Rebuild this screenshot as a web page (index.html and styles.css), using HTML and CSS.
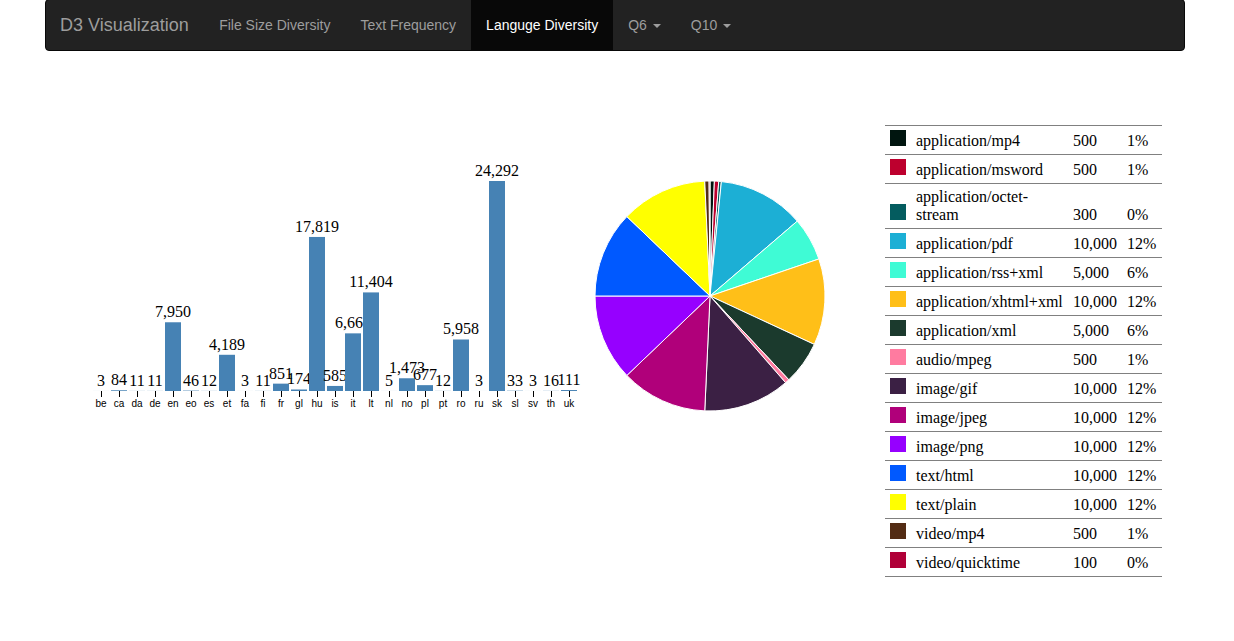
FILE: index.html
```html
<!DOCTYPE html>
<html lang="en">
<head>
<meta charset="utf-8">
<title>D3 Visualization</title>
<link rel="stylesheet" href="styles.css">
</head>
<body>
<div class="page">
  <nav class="navbar">
    <a class="brand" href="#">D3 Visualization</a>
    <ul class="nav">
      <li><a href="#">File Size Diversity</a></li>
      <li><a href="#">Text Frequency</a></li>
      <li class="active"><a href="#">Languge Diversity</a></li>
      <li><a href="#">Q6 <span class="caret"></span></a></li>
      <li><a href="#">Q10 <span class="caret"></span></a></li>
    </ul>
  </nav>
  <main class="dashboard">
    <svg id="bars" class="bars" width="540" height="300" viewBox="45 125 540 300"></svg>
    <svg id="pie" class="pie" width="250" height="300" viewBox="585 125 250 300"></svg>
    <table class="legend">
      <colgroup>
        <col class="col-swatch"><col class="col-type"><col class="col-size"><col class="col-share">
      </colgroup>
      <tbody id="legend-body">
        <tr><td><span class="swatch c1"></span></td><td>application/mp4</td><td>500</td><td>1%</td></tr>
        <tr><td><span class="swatch c2"></span></td><td>application/msword</td><td>500</td><td>1%</td></tr>
        <tr><td><span class="swatch c3"></span></td><td>application/octet-stream</td><td>300</td><td>0%</td></tr>
        <tr><td><span class="swatch c4"></span></td><td>application/pdf</td><td>10,000</td><td>12%</td></tr>
        <tr><td><span class="swatch c5"></span></td><td>application/rss+xml</td><td>5,000</td><td>6%</td></tr>
        <tr><td><span class="swatch c6"></span></td><td>application/xhtml+xml</td><td>10,000</td><td>12%</td></tr>
        <tr><td><span class="swatch c7"></span></td><td>application/xml</td><td>5,000</td><td>6%</td></tr>
        <tr><td><span class="swatch c8"></span></td><td>audio/mpeg</td><td>500</td><td>1%</td></tr>
        <tr><td><span class="swatch c9"></span></td><td>image/gif</td><td>10,000</td><td>12%</td></tr>
        <tr><td><span class="swatch c10"></span></td><td>image/jpeg</td><td>10,000</td><td>12%</td></tr>
        <tr><td><span class="swatch c11"></span></td><td>image/png</td><td>10,000</td><td>12%</td></tr>
        <tr><td><span class="swatch c12"></span></td><td>text/html</td><td>10,000</td><td>12%</td></tr>
        <tr><td><span class="swatch c13"></span></td><td>text/plain</td><td>10,000</td><td>12%</td></tr>
        <tr><td><span class="swatch c14"></span></td><td>video/mp4</td><td>500</td><td>1%</td></tr>
        <tr><td><span class="swatch c15"></span></td><td>video/quicktime</td><td>100</td><td>0%</td></tr>
      </tbody>
    </table>
  </main>
</div>
<script src="script.js"></script>
</body>
</html>
```
FILE: styles.css
```css
* { box-sizing: border-box; }
html, body { margin: 0; padding: 0; background: #fff; }
body { font-family: "Liberation Sans", Arial, sans-serif; font-size: 14px; color: #333; overflow: hidden; }
.page { width: 1140px; margin-left: 45px; }

.navbar {
  display: flex;
  height: 52px;
  margin-top: -1px;
  padding-left: 14px;
  background: #222;
  border: 1px solid #080808;
  border-radius: 4px;
}
.brand {
  padding: 15px 15.4px 15px 0;
  font-size: 18px;
  line-height: 20px;
  color: #9d9d9d;
  text-decoration: none;
}
.nav { display: flex; margin: 0; padding: 0; list-style: none; }
.nav a {
  display: block;
  padding: 15px;
  line-height: 20px;
  color: #9d9d9d;
  text-decoration: none;
}
.nav .active a { color: #fff; background: #080808; }
.caret {
  display: inline-block;
  width: 0;
  height: 0;
  margin-left: 2px;
  vertical-align: middle;
  border-top: 4px solid;
  border-right: 4px solid transparent;
  border-left: 4px solid transparent;
}

.dashboard { display: flex; align-items: flex-start; margin-top: 74px; }
.bars, .pie { display: block; flex: none; }
.bars .bar { fill: steelblue; }
.bars .value { font: 16px "Liberation Serif", "Times New Roman", serif; fill: #000; text-anchor: middle; }
.bars .tick { stroke: #000; stroke-width: 1; }
.bars .tick-label { font: 10px "Liberation Sans", Arial, sans-serif; fill: #000; text-anchor: middle; }
.pie .slice { stroke: #fff; stroke-width: 1; }

.legend {
  flex: none;
  width: 277px;
  margin-left: 50px;
  table-layout: fixed;
  border-collapse: collapse;
  border-top: 1px solid #808080;
  font: 16px/18px "Liberation Serif", "Times New Roman", serif;
  color: #000;
}
.col-swatch { width: 26px; }
.col-type { width: 157px; }
.col-size { width: 54px; }
.col-share { width: 40px; }
.legend tr { border-bottom: 1px solid #808080; }
.legend td { padding: 4px 5px; vertical-align: bottom; }
.swatch { display: inline-block; width: 16px; height: 16px; }

.c1 { background: #00150f; fill: #00150f; }
.c2 { background: #bd002e; fill: #bd002e; }
.c3 { background: #045c5f; fill: #045c5f; }
.c4 { background: #1cafd5; fill: #1cafd5; }
.c5 { background: #3ffbd5; fill: #3ffbd5; }
.c6 { background: #ffbf18; fill: #ffbf18; }
.c7 { background: #1b3a2d; fill: #1b3a2d; }
.c8 { background: #ff7ba0; fill: #ff7ba0; }
.c9 { background: #3b2044; fill: #3b2044; }
.c10 { background: #b0007a; fill: #b0007a; }
.c11 { background: #9600ff; fill: #9600ff; }
.c12 { background: #0059ff; fill: #0059ff; }
.c13 { background: #ffff00; fill: #ffff00; }
.c14 { background: #532c14; fill: #532c14; }
.c15 { background: #b00038; fill: #b00038; }
```
FILE: script.js
```js
var SVG_NS = "http://www.w3.org/2000/svg";

function el(parent, name, attrs, text) {
  var node = document.createElementNS(SVG_NS, name);
  Object.keys(attrs).forEach(function (key) { node.setAttribute(key, attrs[key]); });
  if (text !== undefined) node.textContent = text;
  parent.appendChild(node);
  return node;
}

var languages = [
  ["be", 3], ["ca", 84], ["da", 11], ["de", 11], ["en", 7950], ["eo", 46], ["es", 12],
  ["et", 4189], ["fa", 3], ["fi", 11], ["fr", 851], ["gl", 174], ["hu", 17819], ["is", 585],
  ["it", 6668], ["lt", 11404], ["nl", 5], ["no", 1473], ["pl", 677], ["pt", 12], ["ro", 5958],
  ["ru", 3], ["sk", 24292], ["sl", 33], ["sv", 3], ["th", 16], ["uk", 111]
];

var bars = document.getElementById("bars");
var baseline = 391;
var barScale = 210 / 24292;

languages.forEach(function (item, i) {
  var cx = 101.5 + i * 18;
  var h = item[1] * barScale;
  var top = baseline - h;
  el(bars, "line", { "class": "tick", x1: cx, x2: cx, y1: baseline, y2: baseline + 6 });
  el(bars, "text", { "class": "tick-label", x: cx - 0.5, y: 407 }, item[0]);
  el(bars, "rect", { "class": "bar", x: cx - 8.5, y: top, width: 16, height: h });
  el(bars, "text", { "class": "value", x: cx - 0.5, y: top - 5 }, item[1].toLocaleString("en-US"));
});

var sizes = [500, 500, 300, 10000, 5000, 10000, 5000, 500, 10000, 10000, 10000, 10000, 10000, 500, 100];
var total = sizes.reduce(function (a, b) { return a + b; }, 0);
var pie = document.getElementById("pie");
var cx = 710, cy = 296, r = 115, angle = 0;

sizes.forEach(function (size, i) {
  var next = angle + size / total * Math.PI * 2;
  var x0 = cx + r * Math.sin(angle), y0 = cy - r * Math.cos(angle);
  var x1 = cx + r * Math.sin(next), y1 = cy - r * Math.cos(next);
  var large = next - angle > Math.PI ? 1 : 0;
  el(pie, "path", {
    "class": "slice c" + (i + 1),
    d: "M" + cx + "," + cy + "L" + x0 + "," + y0 + "A" + r + "," + r + " 0 " + large + " 1 " + x1 + "," + y1 + "Z"
  });
  angle = next;
});
```
